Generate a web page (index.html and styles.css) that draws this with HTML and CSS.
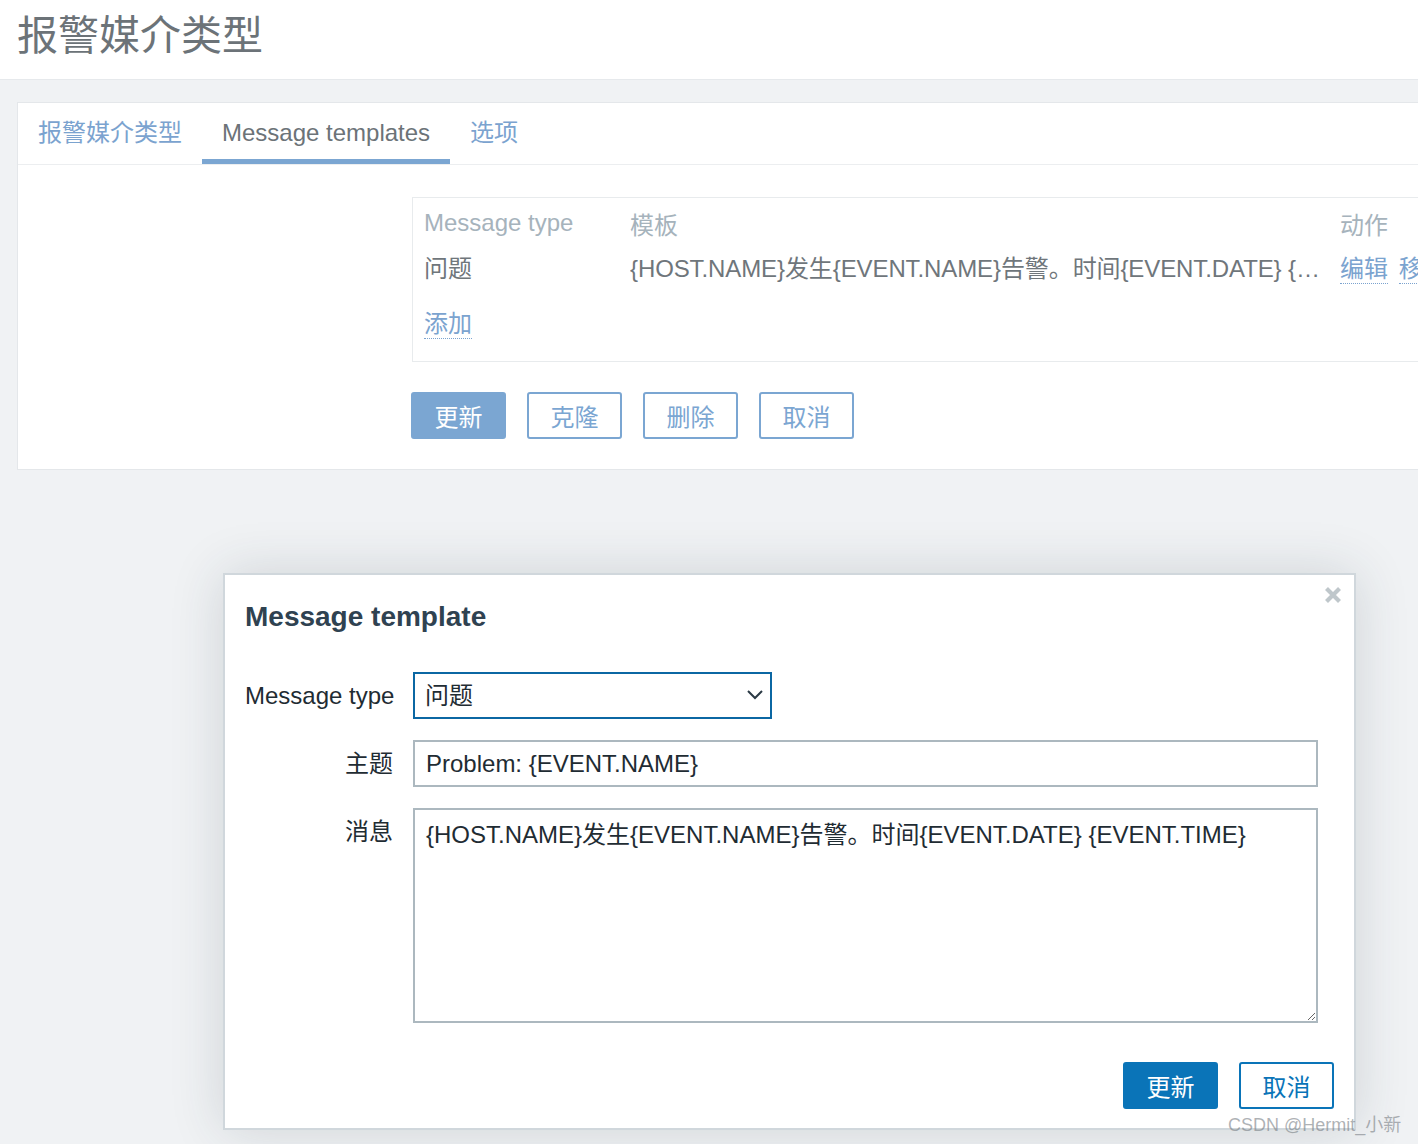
FILE: index.html
```html
<!DOCTYPE html>
<html lang="zh">
<head>
<meta charset="utf-8">
<title>报警媒介类型</title>
<link rel="stylesheet" href="styles.css">
</head>
<body>
<header class="page-header">
  <h1>报警媒介类型</h1>
</header>
<main class="content">
  <section class="card">
    <nav class="tabs">
      <a class="tab">报警媒介类型</a>
      <a class="tab active">Message templates</a>
      <a class="tab">选项</a>
    </nav>
    <div class="card-body">
      <div class="table-box">
        <table class="list">
          <thead>
            <tr><th class="c1">Message type</th><th class="c2">模板</th><th class="c3">动作</th></tr>
          </thead>
          <tbody>
            <tr>
              <td class="c1">问题</td>
              <td class="c2"><div class="ellip">{HOST.NAME}发生{EVENT.NAME}告警。时间{EVENT.DATE} {EVENT.TIME}</div></td>
              <td class="c3"><a class="link">编辑</a> <a class="link">移除</a></td>
            </tr>
          </tbody>
        </table>
        <div class="add-row"><a class="link">添加</a></div>
      </div>
      <div class="actions">
        <button class="btn btn-primary">更新</button>
        <button class="btn">克隆</button>
        <button class="btn">删除</button>
        <button class="btn">取消</button>
      </div>
    </div>
  </section>
</main>

<div class="modal">
  <button class="modal-close" aria-label="关闭">
    <svg width="18" height="18" viewBox="0 0 18 18"><path d="M2.5 2.5 L15.5 15.5 M15.5 2.5 L2.5 15.5" stroke="#bfc7cb" stroke-width="4.2" stroke-linecap="butt"/></svg>
  </button>
  <h2 class="modal-title">Message template</h2>
  <form class="modal-form">
    <label class="f-label">Message type</label>
    <div class="select-wrap">
      <select class="select"><option>问题</option></select>
      <svg class="chevron" width="18" height="12" viewBox="0 0 18 12"><polyline points="2,2 9,9 16,2" fill="none" stroke="#2b3a45" stroke-width="2"/></svg>
    </div>
    <label class="f-label">主题</label>
    <input class="input" type="text" value="Problem: {EVENT.NAME}">
    <label class="f-label">消息</label>
    <textarea class="textarea">{HOST.NAME}发生{EVENT.NAME}告警。时间{EVENT.DATE} {EVENT.TIME}</textarea>
  </form>
  <div class="modal-actions">
    <button class="mbtn mbtn-primary">更新</button>
    <button class="mbtn">取消</button>
  </div>
</div>

<div class="watermark">CSDN @Hermit_小新</div>
</body>
</html>
```
FILE: styles.css
```css
* { box-sizing: border-box; }

html, body {
  margin: 0;
  padding: 0;
}

body {
  width: 1418px;
  height: 1144px;
  overflow: hidden;
  background: #f0f2f4;
  font-family: "Liberation Sans", "Noto Sans CJK SC", sans-serif;
  font-size: 24px;
  color: #1f2c33;
  position: relative;
}

.page-header {
  height: 80px;
  background: #ffffff;
  border-bottom: 1px solid #e6e9ec;
}

.page-header h1 {
  margin: 0;
  padding-left: 17px;
  padding-top: 2px;
  font-size: 41px;
  font-weight: normal;
  line-height: 68px;
  color: #6c7378;
}

.content {
  padding-top: 22px;
}

.card {
  margin-left: 17px;
  margin-right: -60px;
  background: #ffffff;
  border: 1px solid #e4e7ea;
}

.tabs {
  display: flex;
  height: 62px;
  border-bottom: 1px solid #eceef0;
}

.tab {
  display: block;
  height: 61px;
  padding: 5px 20px 0;
  line-height: 50px;
  border-bottom: 5px solid transparent;
  color: #7ba3cf;
  white-space: nowrap;
}

.tab.active {
  color: #6c7378;
  border-bottom-color: #7ba6d2;
}

.card-body {
  padding: 32px 0 30px 394px;
}

.table-box {
  border: 1px solid #e8ebed;
  padding: 4px 11px 15px;
}

.list {
  border-collapse: collapse;
  table-layout: fixed;
}

.list th, .list td {
  padding: 0;
  height: 44px;
  text-align: left;
  font-weight: normal;
  white-space: nowrap;
  vertical-align: middle;
}

.list th {
  color: #a6b3bc;
}

.list td {
  color: #6f767b;
}

.list thead th {
  padding-bottom: 2px;
}

.list tbody td {
  padding-bottom: 3px;
}

.list .c1 { width: 206px; }
.list .c2 { width: 710px; }
.list .c3 { width: 120px; }

.ellip {
  width: 696px;
  overflow: hidden;
  text-overflow: ellipsis;
  white-space: nowrap;
  letter-spacing: -0.1px;
}

.link {
  color: #7ba3cf;
  border-bottom: 1px dotted #7ba3cf;
  padding-bottom: 1px;
}

.c3 .link + .link {
  margin-left: 4px;
}

.add-row {
  margin-top: 12px;
  height: 44px;
  line-height: 44px;
}

.actions {
  display: flex;
  gap: 21px;
  margin-top: 30px;
  margin-left: -1px;
}

.btn {
  width: 95px;
  height: 47px;
  border: 2px solid #7ba6d2;
  border-radius: 3px;
  background: #ffffff;
  color: #7ba6d2;
  font-family: inherit;
  font-size: 24px;
  padding: 0;
}

.btn-primary {
  background: #7ba6d2;
  color: #ffffff;
}

/* Modal */
.modal {
  position: absolute;
  left: 223px;
  top: 573px;
  width: 1133px;
  height: 557px;
  background: #ffffff;
  border: 2px solid #d0d7dc;
  padding: 0 20px;
  box-shadow: 0 0 50px rgba(40, 55, 70, 0.16);
}

.modal-close {
  position: absolute;
  top: 11px;
  right: 12px;
  width: 18px;
  height: 18px;
  padding: 0;
  border: none;
  background: none;
  line-height: 0;
}

.modal-title {
  margin: 0;
  padding-top: 24px;
  line-height: 36px;
  font-size: 28px;
  font-weight: bold;
  color: #2f4251;
}

.modal-form {
  display: grid;
  grid-template-columns: 148px 1fr;
  column-gap: 20px;
  row-gap: 21px;
  margin-top: 37px;
  padding-right: 16px;
}

.f-label {
  text-align: right;
  line-height: 47px;
  color: #1f2c33;
  white-space: nowrap;
}

.select-wrap {
  position: relative;
  width: 359px;
  height: 47px;
}

.select {
  appearance: none;
  -webkit-appearance: none;
  width: 100%;
  height: 47px;
  border: 2px solid #0b67a3;
  border-radius: 0;
  background: #ffffff;
  padding: 0 40px 0 10px;
  font-family: inherit;
  font-size: 24px;
  color: #1f2c33;
}

.chevron {
  position: absolute;
  right: 8px;
  top: 17px;
}

.input {
  height: 47px;
  width: 100%;
  border: 2px solid #acb8bf;
  border-radius: 0;
  padding: 0 11px;
  font-family: inherit;
  font-size: 24px;
  color: #1f2c33;
}

.textarea {
  height: 215px;
  width: 100%;
  border: 2px solid #acb8bf;
  border-radius: 0;
  padding: 8px 11px;
  line-height: 34px;
  font-family: inherit;
  font-size: 24px;
  color: #1f2c33;
  resize: both;
}

.modal-actions {
  display: flex;
  justify-content: flex-end;
  gap: 21px;
  margin-top: 39px;
}

.mbtn {
  width: 95px;
  height: 47px;
  border: 2px solid #0a74b8;
  border-radius: 3px;
  background: #ffffff;
  color: #0a74b8;
  font-family: inherit;
  font-size: 24px;
  padding: 0;
}

.mbtn-primary {
  background: #0a74b8;
  color: #ffffff;
}

.watermark {
  position: absolute;
  left: 1228px;
  top: 1113px;
  font-size: 18px;
  line-height: 24px;
  color: rgba(120, 126, 132, 0.6);
  white-space: nowrap;
}
```
